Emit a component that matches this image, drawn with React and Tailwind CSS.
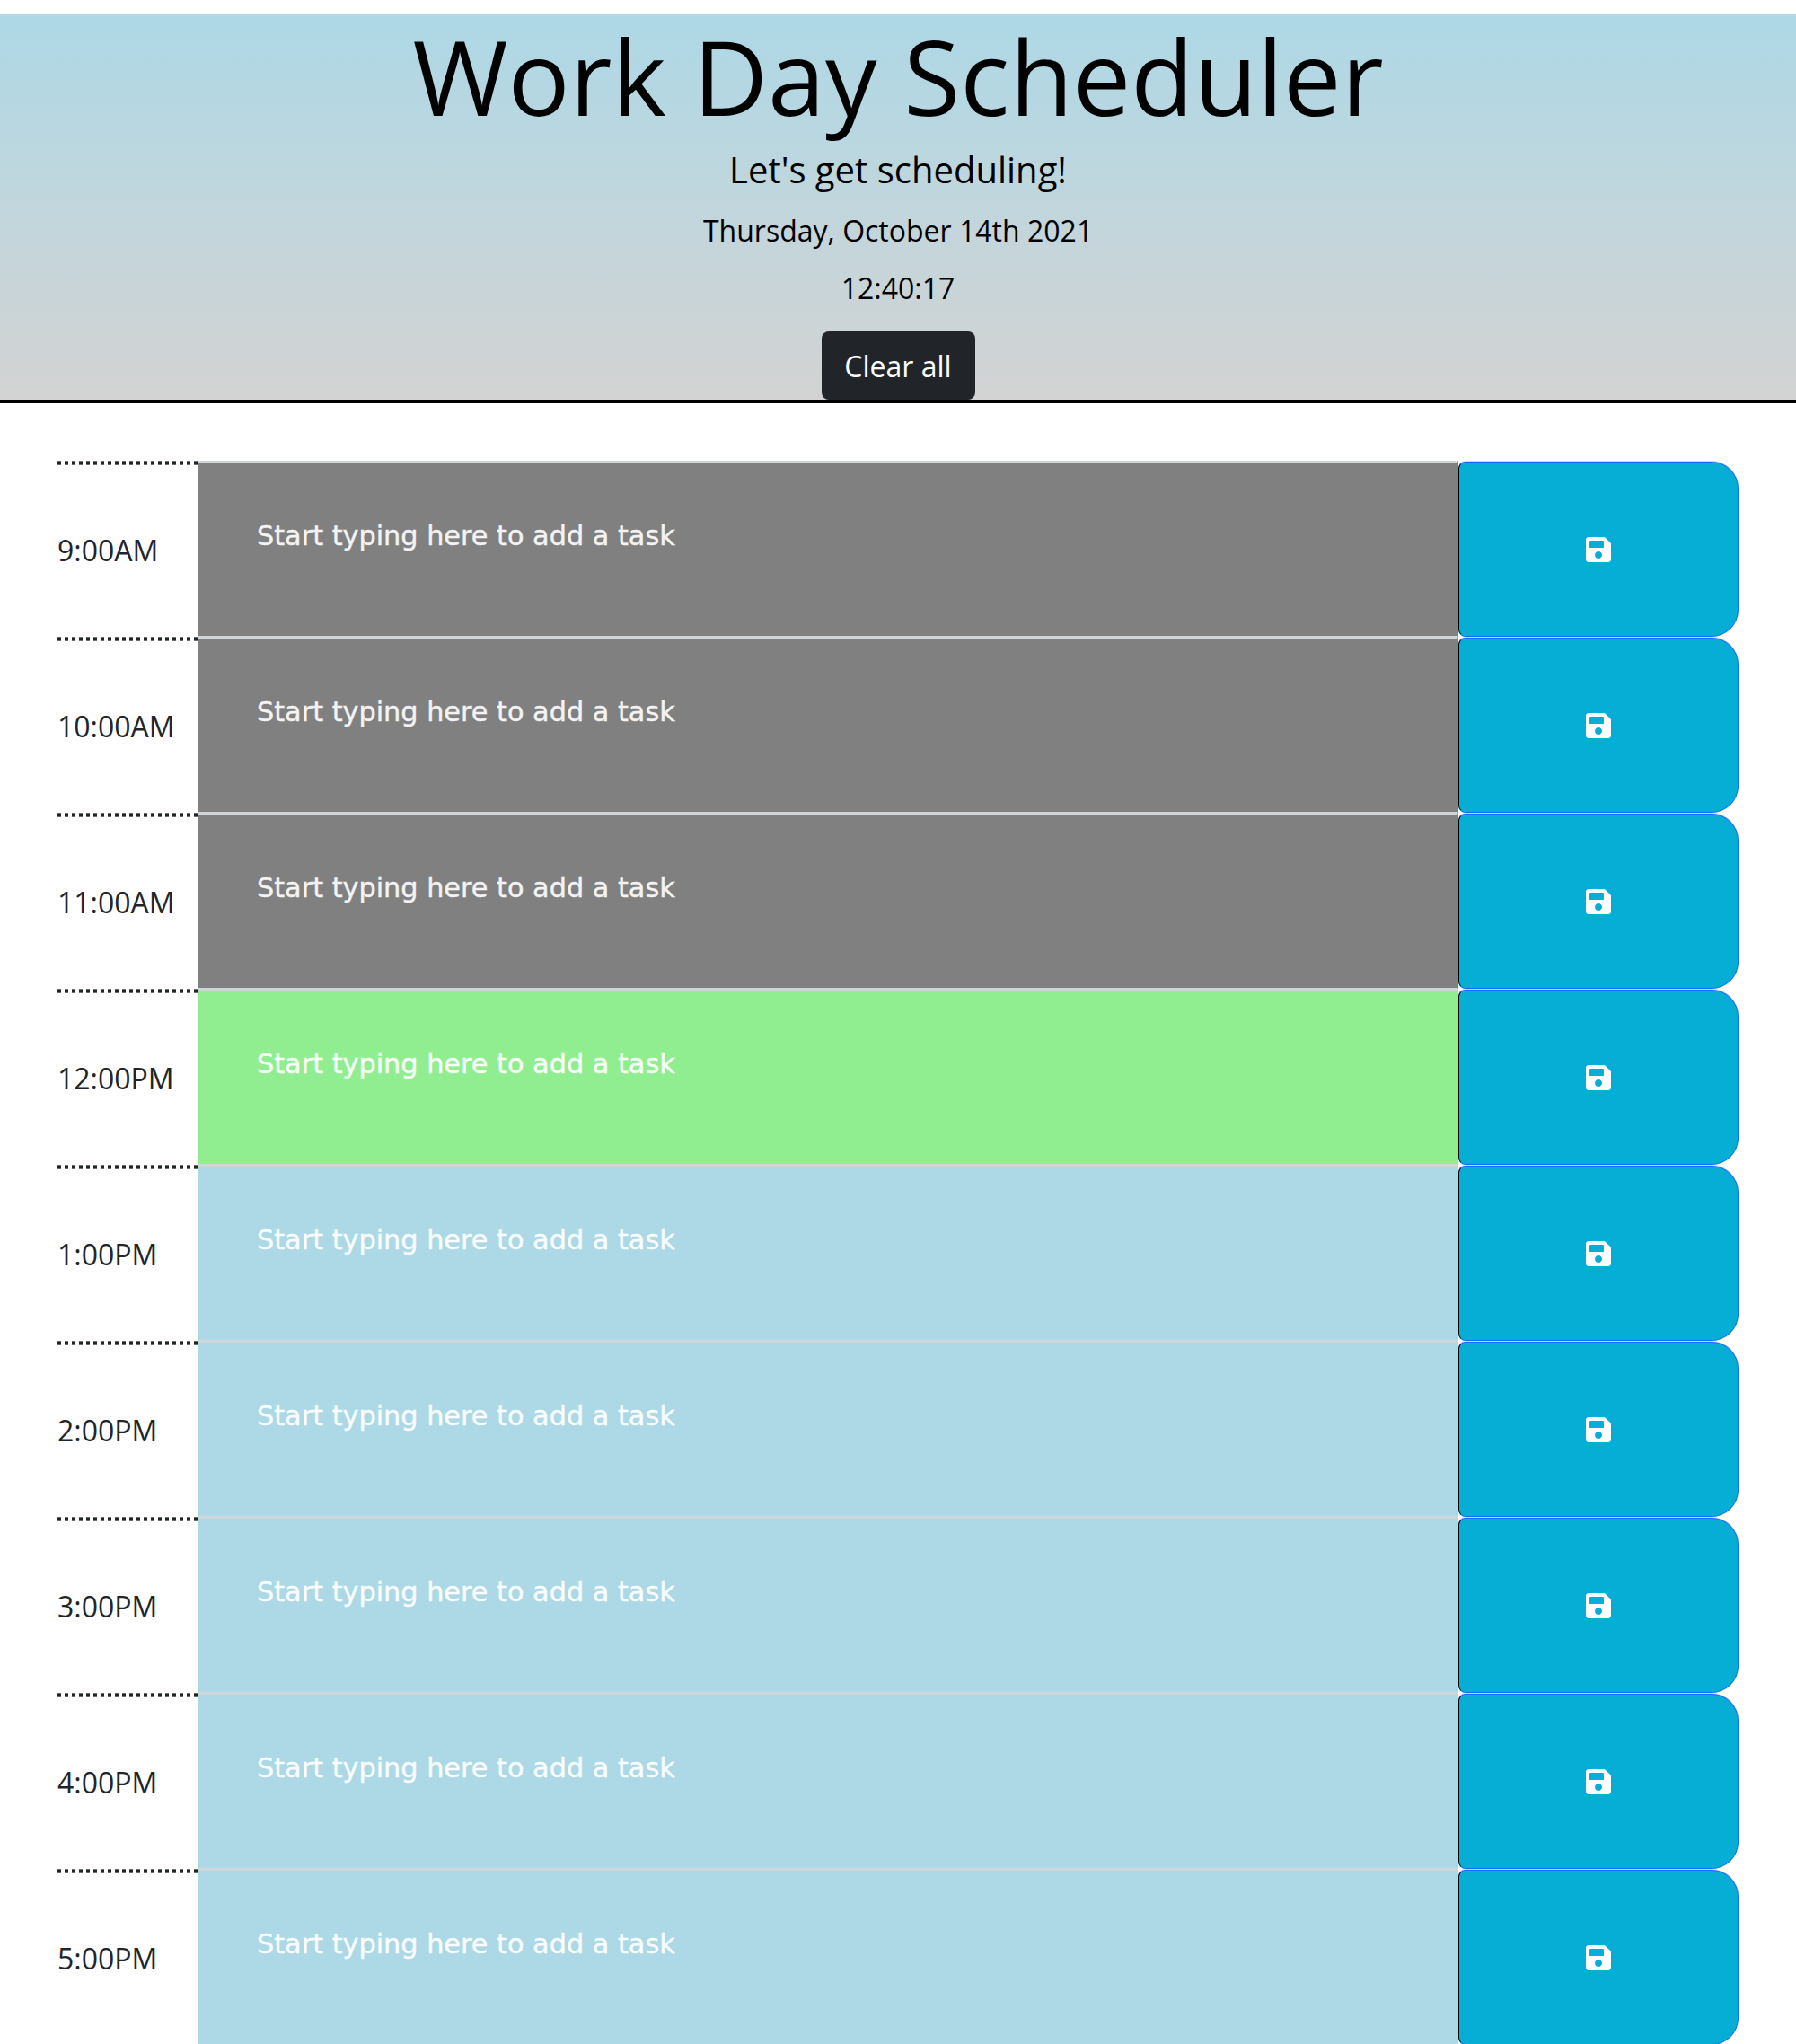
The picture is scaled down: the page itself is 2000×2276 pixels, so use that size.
import { FaSave } from "react-icons/fa";

const rows = [
  ["9:00AM", "bg-[#808080] text-[#f3f3f3]"],
  ["10:00AM", "bg-[#808080] text-[#f3f3f3]"],
  ["11:00AM", "bg-[#808080] text-[#f3f3f3]"],
  ["12:00PM", "bg-[#90ee90] text-[#f8fef8]"],
  ["1:00PM", "bg-[#add8e6] text-[#f8fcfd]"],
  ["2:00PM", "bg-[#add8e6] text-[#f8fcfd]"],
  ["3:00PM", "bg-[#add8e6] text-[#f8fcfd]"],
  ["4:00PM", "bg-[#add8e6] text-[#f8fcfd]"],
  ["5:00PM", "bg-[#add8e6] text-[#f8fcfd]"],
];

export default function App() {
  return (
    <div className="h-[2276px] w-[2000px] overflow-hidden bg-white pt-4 font-['Open_Sans',sans-serif] text-[32px] leading-[48px] text-[#212529]">
      <header className="flex h-[433px] flex-col items-center border-b-4 border-black bg-linear-to-b from-[#add8e6] to-[#d3d3d3] text-black">
        <h1 className="h-[137px] text-[114.9px] leading-[137px] whitespace-nowrap">Work Day Scheduler</h1>
        <p className="mt-[6px] text-[40px] leading-[60px]">Let's get scheduling!</p>
        <p className="mt-[14px]">Thursday, October 14th 2021</p>
        <p className="mt-4">12:40:17</p>
        <button className="mt-[24px] h-[76px] w-[171px] shrink-0 rounded-lg bg-[#212529] pt-px text-white">Clear all</button>
      </header>
      <main className="mx-16 mt-16">
        {rows.map(([time, color]) => (
          <div key={time} className="flex h-[196px]">
            <div className="w-[156px]">
              <div className="h-[5px] bg-[repeating-linear-gradient(90deg,#212529_0_4px,transparent_4px_8px)] [mask-image:linear-gradient(#000a_1px,#000_1px_4px,#000a_4px)]" />
              <div className="pt-[71px]">{time}</div>
            </div>
            <div className={`h-[196px] w-[1404px] border border-t-2 border-[#d0d5da] border-r-transparent border-l-black pt-[58px] pl-[65px] font-['DejaVu_Sans',sans-serif] text-[30.3px] [-webkit-text-stroke:0.4px_currentColor] ${color}`}>
              Start typing here to add a task
            </div>
            <button className="mt-px flex h-[195px] w-[312px] items-center justify-center rounded-l-lg rounded-r-[30px] border border-[#0d6efd] border-l-black bg-[#06aed5] pt-px text-white shadow-[0_-1px_0_#c2daff]">
              <FaSave className="h-8 w-7" />
            </button>
          </div>
        ))}
      </main>
    </div>
  );
}
